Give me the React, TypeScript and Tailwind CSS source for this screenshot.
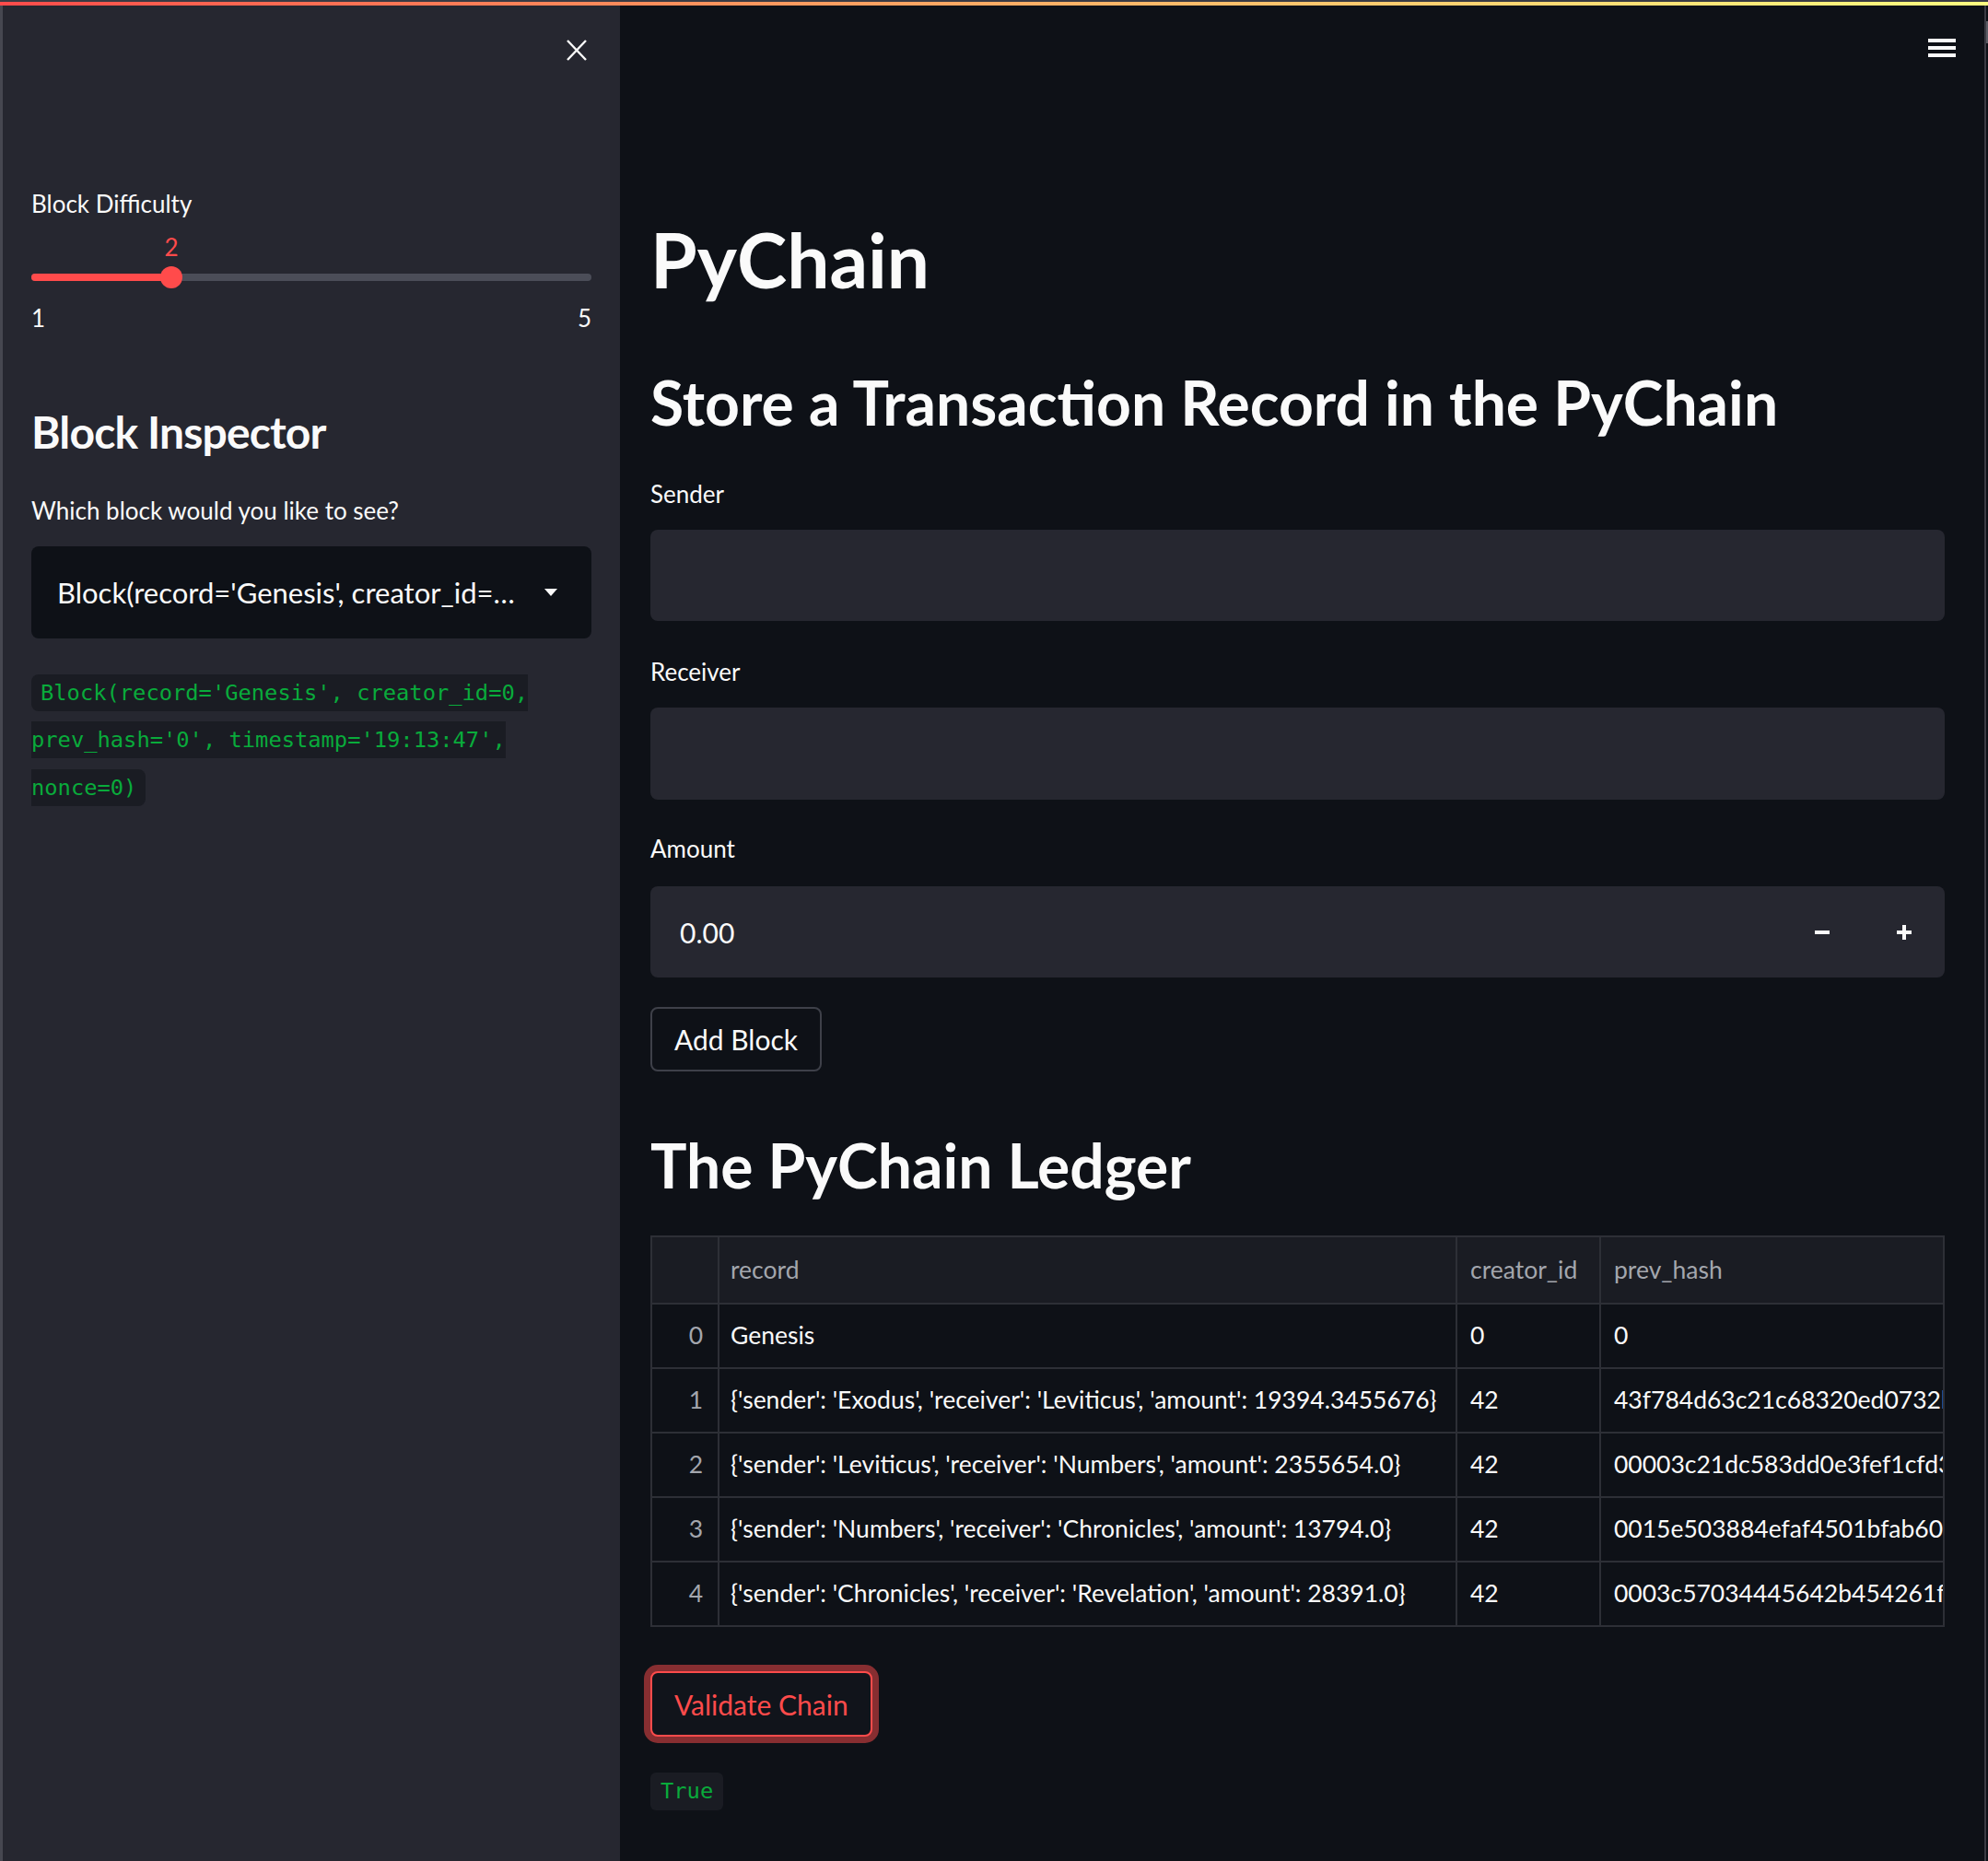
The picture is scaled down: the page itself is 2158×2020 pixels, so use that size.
import React from 'react'

const rows = [
  { idx: 0, record: 'Genesis', creator: '0', hash: '0' },
  { idx: 1, record: "{'sender': 'Exodus', 'receiver': 'Leviticus', 'amount': 19394.3455676}", creator: '42', hash: '43f784d63c21c68320ed0732b7e1a9' },
  { idx: 2, record: "{'sender': 'Leviticus', 'receiver': 'Numbers', 'amount': 2355654.0}", creator: '42', hash: '00003c21dc583dd0e3fef1cfd3e5b2' },
  { idx: 3, record: "{'sender': 'Numbers', 'receiver': 'Chronicles', 'amount': 13794.0}", creator: '42', hash: '0015e503884efaf4501bfab600e7c4' },
  { idx: 4, record: "{'sender': 'Chronicles', 'receiver': 'Revelation', 'amount': 28391.0}", creator: '42', hash: '0003c57034445642b454261f99a8d' },
]

function Slider({ value, min, max }: { value: number; min: number; max: number }) {
  const pct = ((value - min) / (max - min)) * 100
  return (
    <div className="relative h-[60px]">
      <div className="absolute top-0 -translate-x-1/2 text-[26px] leading-[1.2] text-[#ff4b4b]" style={{ left: `${pct}%` }}>
        {value}
      </div>
      <div className="absolute top-[44px] left-0 right-0 h-[8px] rounded-full bg-[#4b4d58]">
        <div className="h-full rounded-full bg-[#ff4b4b]" style={{ width: `${pct}%` }} />
      </div>
      <div className="absolute top-[36px] w-[24px] h-[24px] -translate-x-1/2 rounded-full bg-[#ff4b4b]" style={{ left: `${pct}%` }} />
    </div>
  )
}

function Sidebar() {
  return (
    <div className="w-[673px] shrink-0 bg-[#262730] border-l-[3px] border-[#464750] px-[31px] flex flex-col text-[#fafafa]">
      <div className="flex justify-end pt-[37px] pr-[5px]">
        <svg width="22" height="23" viewBox="0 0 22 23">
          <path d="M1 1 L21 22 M21 1 L1 22" stroke="#fafafa" strokeWidth="2.4" fill="none" />
        </svg>
      </div>

      <div className="mt-[140px] text-[26px] leading-[1.2]">Block Difficulty</div>
      <div className="mt-[16px]">
        <Slider value={2} min={1} max={5} />
      </div>
      <div className="mt-[17px] flex justify-between text-[26px] leading-[1.2]">
        <span>1</span>
        <span>5</span>
      </div>

      <h2 className="mt-[79px] text-[48px] leading-[1.2] font-bold tracking-[-0.85px]">Block Inspector</h2>
      <div className="mt-[41px] text-[26px] leading-[1.2]">Which block would you like to see?</div>

      <div className="mt-[23px] h-[100px] rounded-lg bg-[#0e1117] flex items-center pl-[28px] pr-[37px]">
        <span className="flex-1 min-w-0 truncate text-[31px] leading-[1.2]">Block(record='Genesis', creator_id=…</span>
        <svg width="14" height="8" viewBox="0 0 14 8" className="ml-[24px] shrink-0">
          <path d="M0 0 L14 0 L7 8 Z" fill="#fafafa" />
        </svg>
      </div>

      <p className="mt-[30px] text-[30px] leading-[51.2px]">
        <code className="font-[family-name:DejaVu_Sans_Mono,monospace] text-[23.75px] leading-none text-[#09ab3b] bg-[#1a1c23] rounded-lg py-[6px] px-[10px]">
          Block(record='Genesis', creator_id=0, prev_hash='0', timestamp='19:13:47', nonce=0)
        </code>
      </p>
    </div>
  )
}

function Ledger() {
  return (
    <div className="mt-[37px] border-l-2 border-t-2 border-[#2d2f36] grid grid-cols-[73px_801px_156px_minmax(0,1fr)] text-[26.5px] leading-[1.2]">
      <div className="h-[73px] bg-[#1a1c23] border-r-2 border-b-2 border-[#2d2f36]" />
      <div className="h-[73px] bg-[#1a1c23] border-r-2 border-b-2 border-[#2d2f36] flex items-center px-[12px] text-[#a3a6ad]">record</div>
      <div className="h-[73px] bg-[#1a1c23] border-r-2 border-b-2 border-[#2d2f36] flex items-center px-[14px] text-[#a3a6ad] overflow-hidden whitespace-nowrap">creator_id</div>
      <div className="h-[73px] bg-[#1a1c23] border-r-2 border-b-2 border-[#2d2f36] flex items-center px-[14px] text-[#a3a6ad] overflow-hidden whitespace-nowrap">prev_hash</div>
      {rows.map((r) => (
        <React.Fragment key={r.idx}>
          <div className="h-[70px] border-r-2 border-b-2 border-[#2d2f36] flex items-center justify-end pr-[16px] text-[#a3a6ad]">{r.idx}</div>
          <div className="h-[70px] border-r-2 border-b-2 border-[#2d2f36] flex items-center px-[12px] whitespace-nowrap overflow-hidden">{r.record}</div>
          <div className="h-[70px] border-r-2 border-b-2 border-[#2d2f36] flex items-center px-[14px]">{r.creator}</div>
          <div className="h-[70px] border-r-2 border-b-2 border-[#2d2f36] flex items-center pl-[14px] whitespace-nowrap overflow-hidden">{r.hash}</div>
        </React.Fragment>
      ))}
    </div>
  )
}

function Main() {
  return (
    <div className="flex-1 min-w-0 flex">
      <div className="flex-1 min-w-0 flex flex-col pl-[33px] pr-[43px] text-[#fafafa]">
        <div className="flex justify-end pt-[36px] -mr-[12px]">
          <svg width="30" height="20" viewBox="0 0 30 20">
            <rect x="0" y="0" width="30" height="4" fill="#fafafa" />
            <rect x="0" y="8" width="30" height="4" fill="#fafafa" />
            <rect x="0" y="16" width="30" height="4" fill="#fafafa" />
          </svg>
        </div>

        <h1 className="mt-[170px] text-[82px] leading-[1.2] font-bold">PyChain</h1>
        <h2 className="mt-[67px] text-[66px] leading-[1.2] font-bold">Store a Transaction Record in the PyChain</h2>

        <label className="mt-[44px] text-[26px] leading-[1.2]">Sender</label>
        <div className="mt-[23px] h-[99px] rounded-lg bg-[#262730]" />

        <label className="mt-[40px] text-[26px] leading-[1.2]">Receiver</label>
        <div className="mt-[23px] h-[100px] rounded-lg bg-[#262730]" />

        <label className="mt-[38px] text-[26px] leading-[1.2]">Amount</label>
        <div className="mt-[25px] h-[99px] rounded-lg bg-[#262730] flex items-center">
          <div className="flex-1 pl-[32px] text-[30px] leading-[1.2]">0.00</div>
          <div className="w-[88px] flex justify-center">
            <svg width="16" height="4" viewBox="0 0 16 4"><rect width="16" height="4" fill="#fafafa" /></svg>
          </div>
          <div className="w-[89px] flex justify-center">
            <svg width="16" height="16" viewBox="0 0 16 16">
              <rect x="0" y="6" width="16" height="4" fill="#fafafa" />
              <rect x="6" y="0" width="4" height="16" fill="#fafafa" />
            </svg>
          </div>
        </div>

        <div className="mt-[32px]">
          <button className="h-[70px] px-[24px] rounded-lg border-2 border-[#3e4049] bg-[#0e1117] text-[30px] leading-[1.2] text-[#fafafa]">Add Block</button>
        </div>

        <h2 className="mt-[62px] text-[66px] leading-[1.2] font-bold">The PyChain Ledger</h2>

        <Ledger />

        <div className="mt-[48px]">
          <button className="h-[71px] px-[24px] rounded-lg border-2 border-[#ff4b4b] bg-[#11141b] shadow-[0_0_0_7px_rgba(255,75,75,0.5)] text-[30px] leading-[1.2] text-[#ff4b4b]">Validate Chain</button>
        </div>

        <div className="mt-[39px]">
          <code className="inline-flex items-center h-[41px] px-[11px] rounded-md bg-[#1a1c23] font-[family-name:DejaVu_Sans_Mono,monospace] text-[23.75px] text-[#09ab3b]">True</code>
        </div>
      </div>
      <div className="w-[4px] shrink-0 flex">
        <div className="w-[2px] bg-[#3a3b43]" />
        <div className="w-[2px] flex flex-col">
          <div className="h-[17px]" />
          <div className="h-[24px] bg-[#5c5d65]" />
        </div>
      </div>
    </div>
  )
}

export default function App() {
  return (
    <div className="w-[2158px] h-[2020px] flex flex-col bg-[#0e1117] overflow-hidden font-[family-name:Lato,Liberation_Sans,sans-serif]">
      <div className="h-[2px] shrink-0 bg-[#3a3b44]" />
      <div className="h-[4px] shrink-0 bg-linear-to-r from-[#ff4b4b] to-[#fffd80]" />
      <div className="flex flex-1 min-h-0">
        <Sidebar />
        <Main />
      </div>
    </div>
  )
}
